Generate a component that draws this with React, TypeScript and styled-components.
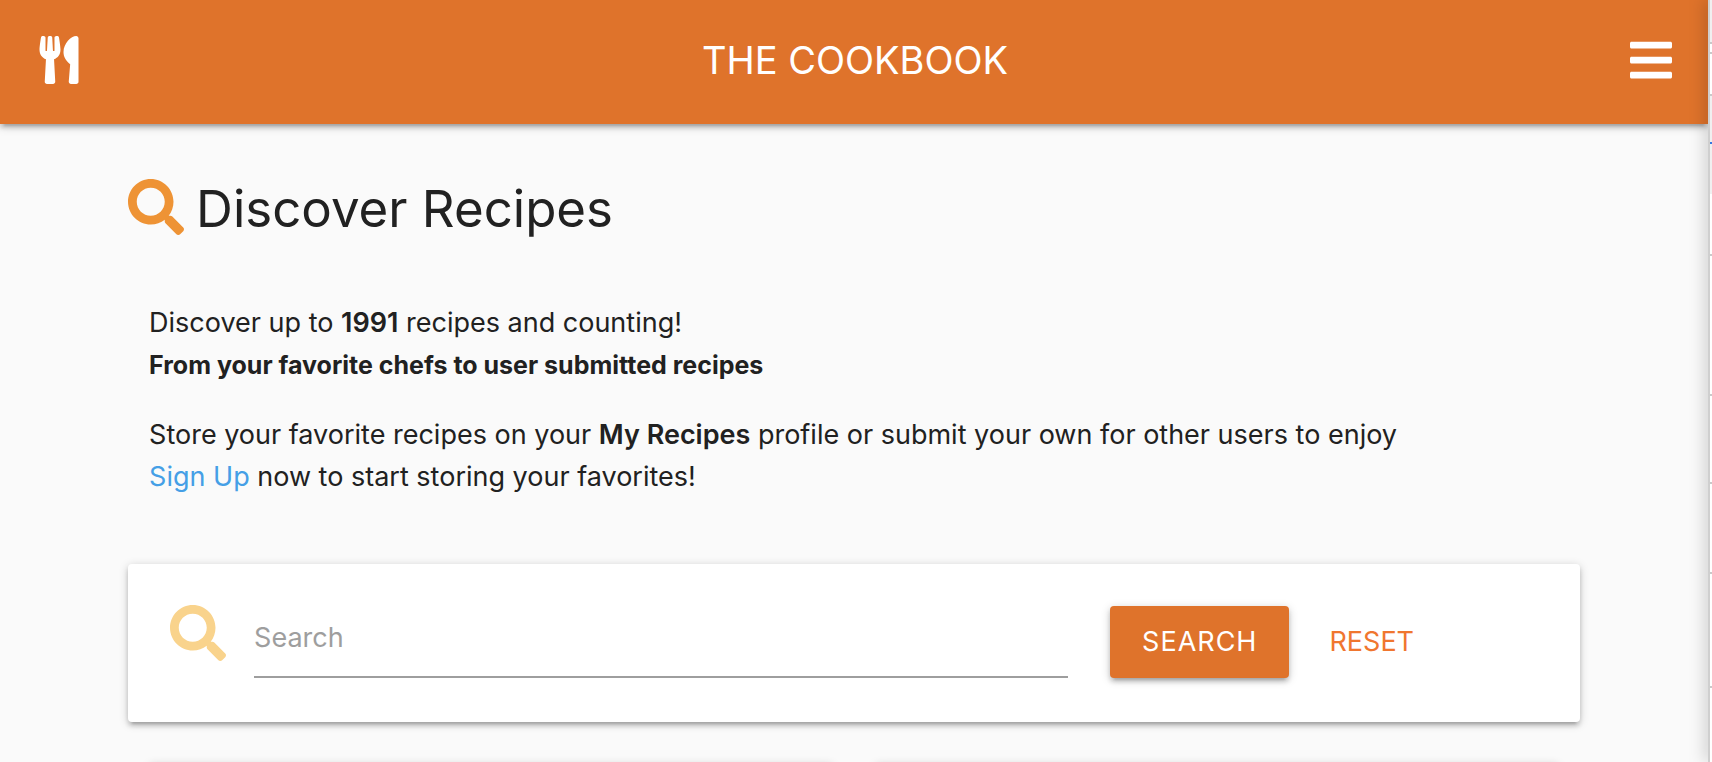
import React from "react";
import styled, { createGlobalStyle } from "styled-components";
import { FaBars, FaSearch, FaUtensils } from "react-icons/fa";

const GlobalStyle = createGlobalStyle`
  *, *::before, *::after { box-sizing: border-box; }
  body {
    margin: 0;
    background: #fafafa;
    color: #212121;
    font-family: Inter, "Liberation Sans", sans-serif;
    font-size: 27px;
    line-height: 42px;
  }
`;

const elevation =
  "0 4px 4px 0 rgba(0,0,0,.14), 0 6px 2px -4px rgba(0,0,0,.12), 0 2px 10px 0 rgba(0,0,0,.2)";

const Frame = styled.div`
  display: flex;
  height: 100vh;
  overflow: hidden;
`;

const Page = styled.div`
  flex: 1;
  min-width: 0;
  overflow: hidden;
`;

const NavBar = styled.header`
  display: grid;
  grid-template-columns: 1fr auto 1fr;
  align-items: center;
  padding: 36px 33px 40px 35px;
  background: #df732b;
  color: #fff;
  box-shadow: ${elevation};
`;

const HomeLink = styled.a`
  display: flex;
  justify-self: start;
  color: inherit;
`;

const Brand = styled.a`
  color: inherit;
  font-size: 38px;
  line-height: 48px;
  text-decoration: none;
`;

const MenuButton = styled.button`
  display: flex;
  justify-self: end;
  margin: 0;
  padding: 0;
  border: 0;
  background: none;
  color: inherit;
`;

const Container = styled.main`
  width: 85%;
  margin: 0 auto;
`;

const Heading = styled.h1`
  display: flex;
  align-items: flex-end;
  gap: 12px;
  margin: 55px 0 67px;
  font-size: 51px;
  font-weight: 400;
  line-height: 52px;

  svg { color: #ee9335; }
`;

const Intro = styled.section`
  padding: 0 21px;
  margin-bottom: 66px;

  p { margin: 0 0 28px; }
  strong { font-weight: 600; }
  a { color: #459fe6; text-decoration: none; }
`;

const Tagline = styled.b`
  font-size: 25px;
  font-weight: 700;
  line-height: 32px;
`;

const SearchCard = styled.form`
  display: flex;
  align-items: flex-start;
  padding: 41px 42px 44px;
  border-radius: 4px;
  background: #fff;
  box-shadow: ${elevation};

  svg { flex: none; color: #f9d38c; }
`;

const SearchInput = styled.input`
  flex: 0 1 814px;
  min-width: 0;
  height: 73px;
  margin: 0 42px 0 28px;
  padding: 0 0 6px;
  border: 0;
  border-bottom: 2px solid #9e9e9e;
  background: none;
  color: inherit;
  font: inherit;
  outline: none;

  &::placeholder { color: #9e9e9e; opacity: 1; }
`;

const Button = styled.button<{ $flat?: boolean }>`
  height: 72px;
  margin-top: 1px;
  padding: 0 ${(p) => (p.$flat ? 40 : 32)}px;
  border: 0;
  border-radius: 4px;
  background: ${(p) => (p.$flat ? "transparent" : "#df732b")};
  color: ${(p) => (p.$flat ? "#f0762f" : "#fff")};
  box-shadow: ${(p) => (p.$flat ? "none" : elevation)};
  font: inherit;
  letter-spacing: ${(p) => (p.$flat ? "normal" : "1px")};
`;

const Results = styled.section`
  display: grid;
  grid-template-columns: 1fr 1fr;
  gap: 42px;
  margin-top: 41px;
  padding: 0 21px;
`;

const RecipeCard = styled.article`
  height: 400px;
  border-radius: 4px;
  background: #fff;
  box-shadow: ${elevation};
`;

const SideWindow = styled.aside`
  display: flex;
  flex-direction: column;
  width: 4px;
  border-left: 2px solid #cfcfcf;
  background: #fff;
  box-shadow: 0 0 16px rgba(0, 0, 0, 0.5);
  z-index: 1;
`;

const Pane = styled.div<{ $height: number; $fill?: string; $line?: string }>`
  flex: none;
  height: ${(p) => p.$height}px;
  background: ${(p) => p.$fill ?? "#fff"};
  border-bottom: 2px solid ${(p) => p.$line ?? "#c9c9c9"};
`;

const panes = [
  { height: 44, fill: "#f0f0f0" },
  { height: 10 },
  { height: 42 },
  { height: 48, fill: "#f0f0f0", line: "#3577e0" },
  { height: 50, fill: "#f0f0f0", line: "#f0f0f0" },
  { height: 62 },
  { height: 140 },
  { height: 88 },
  { height: 90 },
  { height: 114 },
];

export default function App() {
  return (
    <>
      <GlobalStyle />
      <Frame>
        <Page>
          <NavBar>
            <HomeLink href="#" aria-label="Home">
              <FaUtensils size={48} />
            </HomeLink>
            <Brand href="#">THE COOKBOOK</Brand>
            <MenuButton type="button" aria-label="Menu">
              <FaBars size={48} />
            </MenuButton>
          </NavBar>
          <Container>
            <Heading>
              <FaSearch size={56} />
              Discover Recipes
            </Heading>
            <Intro>
              <p>
                Discover up to <strong>1991</strong> recipes and counting!
                <br />
                <Tagline>From your favorite chefs to user submitted recipes</Tagline>
              </p>
              <p>
                Store your favorite recipes on your <strong>My Recipes</strong> profile or submit
                your own for other users to enjoy
                <br />
                <a href="#">Sign Up</a> now to start storing your favorites!
              </p>
            </Intro>
            <SearchCard onSubmit={(e) => e.preventDefault()}>
              <FaSearch size={56} />
              <SearchInput type="text" placeholder="Search" aria-label="Search" />
              <Button type="submit">SEARCH</Button>
              <Button type="reset" $flat>
                RESET
              </Button>
            </SearchCard>
            <Results>
              <RecipeCard />
              <RecipeCard />
            </Results>
          </Container>
        </Page>
        <SideWindow>
          {panes.map((pane, i) => (
            <Pane key={i} $height={pane.height} $fill={pane.fill} $line={pane.line} />
          ))}
        </SideWindow>
      </Frame>
    </>
  );
}
